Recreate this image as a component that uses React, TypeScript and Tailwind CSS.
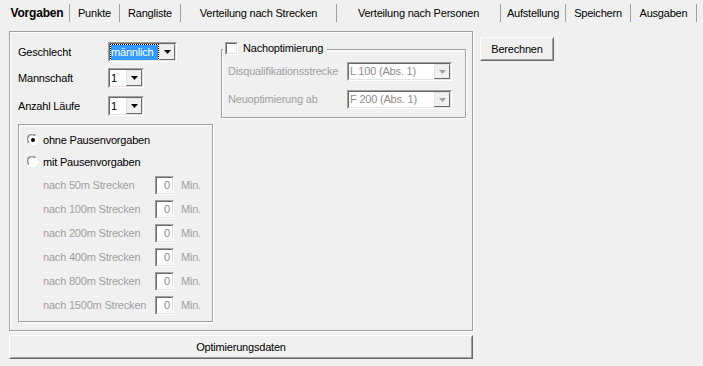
import React from 'react';

const tabs = [
  { text: 'Vorgaben', w: 'w-[65px]', active: true },
  { text: 'Punkte', w: 'w-[50px]' },
  { text: 'Rangliste', w: 'w-[61px]' },
  { text: 'Verteilung nach Strecken', w: 'w-[156px]' },
  { text: 'Verteilung nach Personen', w: 'w-[164px]' },
  { text: 'Aufstellung', w: 'w-[65px]' },
  { text: 'Speichern', w: 'w-[65px]' },
  { text: 'Ausgaben', w: 'w-[66px]' },
];

const pauses = ['50m', '100m', '200m', '400m', '800m', '1500m'];

const Arrow = ({ disabled }: { disabled?: boolean }) => (
  <div className="h-full w-[16px] shrink-0 bg-[#f0f0f0] border border-t-[#e3e3e3] border-l-[#e3e3e3] border-b-[#696969] border-r-[#696969] flex items-center justify-center">
    <svg width="7" height="4" viewBox="0 0 7 4">
      <polygon points="0,0 7,0 3.5,4" fill={disabled ? '#a0a0a0' : '#000'} />
    </svg>
  </div>
);

const Select = ({
  text,
  w,
  h = 'h-[20px]',
  disabled,
  highlight,
}: {
  text: string;
  w: string;
  h?: string;
  disabled?: boolean;
  highlight?: boolean;
}) => (
  <div className={`${w} ${h} shrink-0 border border-t-[#a0a0a0] border-l-[#a0a0a0] border-b-white border-r-white`}>
    <div className="h-full border border-t-[#696969] border-l-[#696969] border-b-[#e3e3e3] border-r-[#e3e3e3] bg-white flex">
      <div className="flex-1 flex items-center px-[1px] min-w-0 overflow-hidden whitespace-nowrap">
        {highlight ? (
          <span className="bg-[#3399ff] text-white outline outline-1 outline-dotted outline-black leading-[15px] w-full">
            {text}
          </span>
        ) : (
          <span className={disabled ? 'text-[#8c8c8c]' : 'text-black'}>{text}</span>
        )}
      </div>
      <Arrow disabled={disabled} />
    </div>
  </div>
);

const Radio = ({ checked }: { checked?: boolean }) => (
  <svg width="12" height="12" viewBox="0 0 12 12" className="shrink-0">
    <circle cx="6" cy="6" r="5.5" fill="#fff" />
    <path d="M1.2 9 A5 5 0 0 1 9 1.2" fill="none" stroke="#a0a0a0" strokeWidth="1" />
    <path d="M2 8.2 A4 4 0 0 1 8.2 2" fill="none" stroke="#696969" strokeWidth="1" />
    <path d="M3 10.8 A5 5 0 0 0 10.8 3" fill="none" stroke="#e3e3e3" strokeWidth="1" />
    {checked && <circle cx="6" cy="6" r="2" fill="#000" />}
  </svg>
);

const Button = ({ text, className }: { text: string; className: string }) => (
  <div className={`${className} border border-t-white border-l-white border-b-[#696969] border-r-[#696969]`}>
    <div className="h-full border border-t-[#f0f0f0] border-l-[#f0f0f0] border-b-[#a0a0a0] border-r-[#a0a0a0] bg-[#f0f0f0] flex items-center justify-center text-black">
      {text}
    </div>
  </div>
);

export default function App() {
  return (
    <div
      className="w-[703px] h-[366px] bg-[#f0f0f0] overflow-hidden text-[11px] tracking-[-0.2px] text-black whitespace-nowrap"
      style={{ fontFamily: '"Liberation Sans", Arial, sans-serif' }}
    >
      <div className="flex h-[23px] pl-[5px] pt-[4px]">
        {tabs.map((t) => (
          <div
            key={t.text}
            className={`${t.w} h-[18px] border-r border-[#a0a0a0] flex items-center justify-center ${t.active ? 'font-bold text-[12px]' : ''}`}
          >
            {t.text}
          </div>
        ))}
      </div>

      <div className="flex px-[9px] pt-[8px]">
        <div className="w-[464px] flex flex-col">
          <div className="h-[300px] border border-[#a0a0a0] shadow-[inset_1px_1px_0_#fff,1px_1px_0_#fff] flex">
            <div className="w-[203px] pl-[8px] pt-[10px] flex flex-col">
              <div className="flex items-center h-[20px]">
                <span className="w-[90px]">Geschlecht</span>
                <Select text="männlich" w="w-[69px]" highlight />
              </div>
              <div className="flex items-center h-[20px] mt-[6px]">
                <span className="w-[90px]">Mannschaft</span>
                <Select text="1" w="w-[36px]" />
              </div>
              <div className="flex items-center h-[20px] mt-[8px]">
                <span className="w-[90px]">Anzahl Läufe</span>
                <Select text="1" w="w-[36px]" />
              </div>

              <div className="mt-[8px] w-[195px] h-[198px] border border-[#a0a0a0] shadow-[inset_1px_1px_0_#fff,1px_1px_0_#fff] pl-[8px] pt-[4px] flex flex-col">
                <div className="flex items-center h-[22px] gap-[4px]">
                  <Radio checked />
                  <span>ohne Pausenvorgaben</span>
                </div>
                <div className="flex items-center h-[22px] gap-[4px]">
                  <Radio />
                  <span>mit Pausenvorgaben</span>
                </div>
                <div className="flex flex-col gap-[5px] mt-[3px]">
                  {pauses.map((p) => (
                    <div key={p} className="flex items-center h-[19px] text-[#a0a0a0]">
                      <span className="w-[128px] pl-[16px]">nach {p} Strecken</span>
                      <div className="w-[19px] h-[19px] shrink-0 border border-t-[#a0a0a0] border-l-[#a0a0a0] border-b-white border-r-white">
                        <div className="h-full border border-t-[#696969] border-l-[#696969] border-b-[#e3e3e3] border-r-[#e3e3e3] bg-white flex items-center justify-end pr-[2px] text-[#8c8c8c]">
                          0
                        </div>
                      </div>
                      <span className="ml-[7px]">Min.</span>
                    </div>
                  ))}
                </div>
              </div>
            </div>

            <div className="relative ml-[8px] mt-[17px] w-[245px] h-[69px] border border-[#a0a0a0] shadow-[inset_1px_1px_0_#fff,1px_1px_0_#fff] pl-[6px] pt-[12px] flex flex-col gap-[9px]">
              <div className="absolute left-[1px] top-[-8px] flex items-center gap-[5px] bg-[#f0f0f0] pl-[2px] pr-[4px] h-[13px]">
                <div className="w-[13px] h-[13px] border border-t-[#a0a0a0] border-l-[#a0a0a0] border-b-white border-r-white">
                  <div className="h-full border border-t-[#696969] border-l-[#696969] border-b-[#e3e3e3] border-r-[#e3e3e3] bg-white" />
                </div>
                <span>Nachoptimierung</span>
              </div>
              <div className="flex items-center text-[#a0a0a0]">
                <span className="w-[119px]">Disqualifikationsstrecke</span>
                <Select text="L 100 (Abs. 1)" w="w-[105px]" h="h-[19px]" disabled />
              </div>
              <div className="flex items-center text-[#a0a0a0]">
                <span className="w-[119px]">Neuoptimierung ab</span>
                <Select text="F 200 (Abs. 1)" w="w-[105px]" h="h-[19px]" disabled />
              </div>
            </div>
          </div>
          <Button text="Optimierungsdaten" className="mt-[4px] h-[24px] w-[464px]" />
        </div>
        <Button text="Berechnen" className="ml-[7px] mt-[6px] h-[24px] w-[74px]" />
      </div>
    </div>
  );
}
